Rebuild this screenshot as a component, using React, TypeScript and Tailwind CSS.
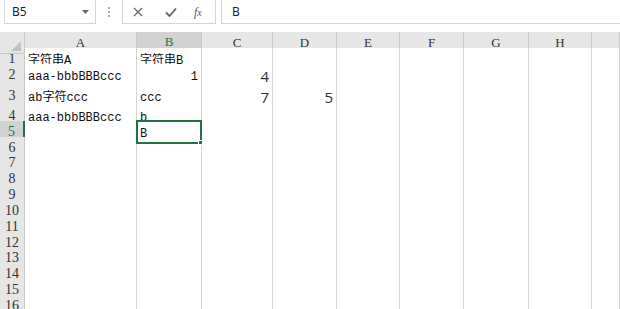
import React from "react";

const cols = "grid grid-cols-[25px_112px_65px_71px_64px_63px_64px_65px_63px_1fr]";
const letters = ["A", "B", "C", "D", "E", "F", "G", "H", ""];
const heights = [16, 21, 20, 16, 16, 15, 16, 16, 16, 16, 16, 15, 16, 16, 16, 16];

type Cell = { t?: string; right?: boolean; num?: boolean };
const data: Record<number, Record<number, Cell>> = {
  1: { 0: { t: "字符串A" }, 1: { t: "字符串B" } },
  2: { 0: { t: "aaa-bbbBBBccc" }, 1: { t: "1", right: true }, 2: { t: "4", right: true, num: true } },
  3: { 0: { t: "ab字符ccc" }, 1: { t: "ccc" }, 2: { t: "7", right: true, num: true }, 3: { t: "5", right: true, num: true } },
  4: { 0: { t: "aaa-bbbBBBccc" }, 1: { t: "b" } },
  5: { 1: { t: "B" } },
};

const cellFont = { fontFamily: '"Liberation Mono", "Noto Sans CJK SC", monospace' };

function Toolbar() {
  return (
    <div className="flex h-[24px] items-stretch bg-white" style={{ fontFamily: '"Noto Sans", "Liberation Sans", sans-serif' }}>
      <div className="ml-[4px] flex w-[92px] items-center justify-between border border-[#d4d4d4] border-t-0 bg-white pl-[7px] pr-[6px] text-[12px] text-[#222]">
        <span>B5</span>
        <svg width="7" height="4" viewBox="0 0 7 4"><path d="M0 0h7L3.5 4z" fill="#666" /></svg>
      </div>
      <div className="flex w-[26px] flex-col items-center justify-center gap-[2px]">
        <span className="h-[2px] w-[2px] bg-[#b0b0b0]" />
        <span className="h-[2px] w-[2px] bg-[#b0b0b0]" />
        <span className="h-[2px] w-[2px] bg-[#b0b0b0]" />
      </div>
      <div className="flex w-[94px] items-center border border-t-0 border-[#d4d4d4] bg-white">
        <svg className="ml-[10px]" width="10" height="10" viewBox="0 0 10 10"><path d="M1 1l8 8M9 1l-8 8" stroke="#666" strokeWidth="1.3" /></svg>
        <svg className="ml-[22px]" width="12" height="10" viewBox="0 0 12 10"><path d="M1 5.5l3.5 3.5L11 1.5" stroke="#666" strokeWidth="1.8" fill="none" /></svg>
        <span className="ml-[17px] text-[12px] italic text-[#555]" style={{ fontFamily: '"Liberation Serif", serif' }}>f<span className="text-[10px]">x</span></span>
      </div>
      <div className="ml-[5px] flex flex-1 items-center border border-r-0 border-t-0 border-[#d4d4d4] bg-white pl-[10px] text-[12px] text-[#222]">
        B
      </div>
    </div>
  );
}

function Header() {
  return (
    <div className={`${cols} h-[16px] bg-[#e6e6e6]`} style={{ fontFamily: '"Liberation Serif", serif' }}>
      <div className="relative border-r border-b border-[#c8c8c8] bg-[#e6e6e6]">
        <svg className="absolute bottom-[2px] right-[3px]" width="10" height="10" viewBox="0 0 10 10"><path d="M10 0V10H0z" fill="#c2c2c2" /></svg>
      </div>
      {letters.map((l, i) => (
        <div
          key={i}
          className={
            i === 1
              ? "flex items-center justify-center border-r border-[#c8c8c8] border-b-2 border-b-[#217346] bg-[#d2d2d2] text-[13px] text-[#217346]"
              : "flex items-center justify-center border-r border-b border-[#c8c8c8] text-[13px] text-[#333]"
          }
        >
          {l}
        </div>
      ))}
    </div>
  );
}

function Row({ n, h }: { n: number; h: number }) {
  const row = data[n] || {};
  const sel = n === 5;
  return (
    <div className={`${cols} bg-[#d4d4d4] pb-px`} style={{ height: h }}>
      <div
        className={
          sel
            ? "flex items-center justify-center border-r-2 border-r-[#217346] bg-[#d2d2d2] text-[14px] text-[#217346]"
            : "flex items-center justify-center border-r border-r-[#c8c8c8] bg-[#e6e6e6] text-[14px] text-[#333]"
        }
        style={{ fontFamily: '"Liberation Serif", serif' }}
      >
        {n}
      </div>
      {letters.map((_, i) => {
        const c = row[i];
        return (
          <div
            key={i}
            className={`flex items-end border-r border-r-[#d4d4d4] bg-white px-[3px] ${c?.right ? "justify-end" : ""} ${sel && i === 1 ? "relative z-10" : ""}`}
          >
            {c?.t && (
              <span
                className={c.num ? "text-[15px] leading-[18px] text-[#333]" : "text-[12px] leading-[15px] text-[#111]"}
                style={c.num ? { fontFamily: '"Open Sans", "Noto Sans", sans-serif' } : cellFont}
              >
                {c.t}
              </span>
            )}
            {sel && i === 1 && (
              <div className="absolute -left-[1px] -top-[1px] -right-[1px] -bottom-[2px] border-2 border-[#217346]">
                <div className="absolute -bottom-[3px] -right-[3px] h-[5px] w-[5px] border border-white bg-[#217346]" />
              </div>
            )}
          </div>
        );
      })}
    </div>
  );
}

export default function App() {
  return (
    <div className="h-[309px] w-[620px] overflow-hidden bg-white">
      <Toolbar />
      <div className="h-[8px] bg-white" />
      <Header />
      {heights.map((h, i) => (
        <Row key={i} n={i + 1} h={h} />
      ))}
    </div>
  );
}
